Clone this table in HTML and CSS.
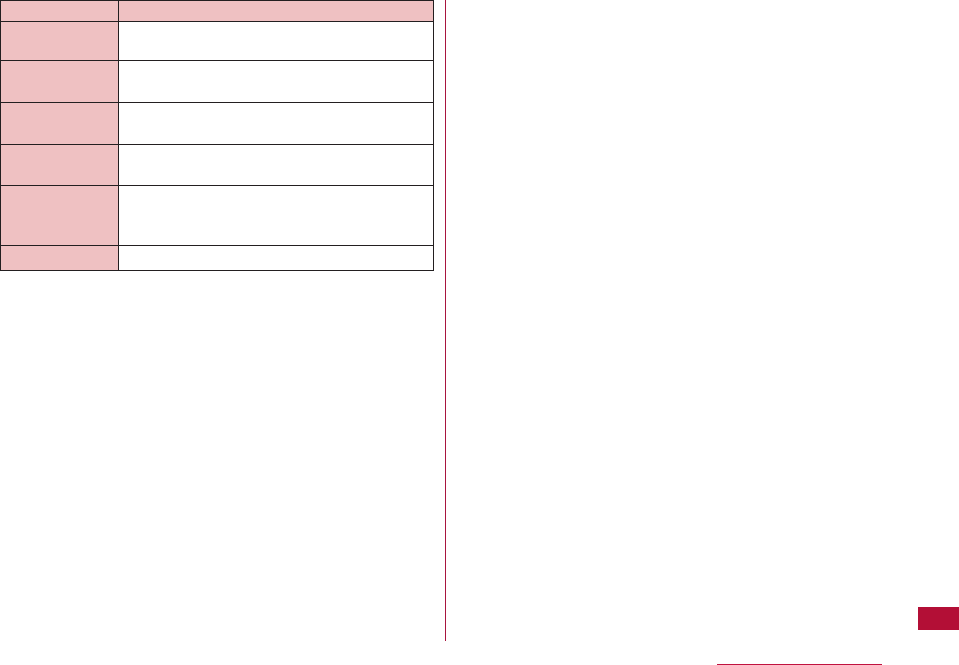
FILE: index.html
```html
<!DOCTYPE html>
<html lang="ja">
<head>
  <meta charset="UTF-8">
  <title>manual page</title>
  <link rel="stylesheet" href="styles.css">
</head>
<body>
  <div class="spread">
    <div class="left-page">
      <div class="spec-table">
        <div class="cell head"></div><div class="cell head"></div>
        <div class="cell label"></div><div class="cell"></div>
        <div class="cell label"></div><div class="cell"></div>
        <div class="cell label"></div><div class="cell"></div>
        <div class="cell label"></div><div class="cell"></div>
        <div class="cell label"></div><div class="cell"></div>
        <div class="cell label"></div><div class="cell"></div>
      </div>
    </div>
    <div class="divider"></div>
    <div class="right-page">
      <div class="index-tab"></div>
    </div>
  </div>
  <div class="footer">
    <div class="footer-rule"></div>
  </div>
</body>
</html>
```

FILE: styles.css
```css
body {
  margin: 0;
  background: #fff;
  font-family: "Noto Sans CJK JP", "Liberation Sans", sans-serif;
}

.spread {
  display: flex;
  height: 641px;
}

.left-page {
  width: 445px;
}

.spec-table {
  display: grid;
  grid-template-columns: 117px 314px;
  grid-template-rows: 20px 38px 41px 41px 40px 59px 24px;
  gap: 1px;
  padding: 1px;
  width: max-content;
  background: #231f20;
}

.cell {
  background: #fff;
}

.cell.head,
.cell.label {
  background: #efc1c2;
}

.divider {
  width: 1px;
  background: #a8143e;
}

.right-page {
  flex: 1;
  display: flex;
  flex-direction: column;
  justify-content: flex-end;
  align-items: flex-end;
  padding-bottom: 11px;
}

.index-tab {
  width: 41px;
  height: 23px;
  background: #b30f36;
}

.footer {
  height: 24px;
  display: flex;
  align-items: flex-end;
  padding-left: 717px;
  box-sizing: border-box;
  padding-bottom: 0;
}

.footer-rule {
  width: 165px;
  height: 1px;
  background: #c0123f;
}
```
